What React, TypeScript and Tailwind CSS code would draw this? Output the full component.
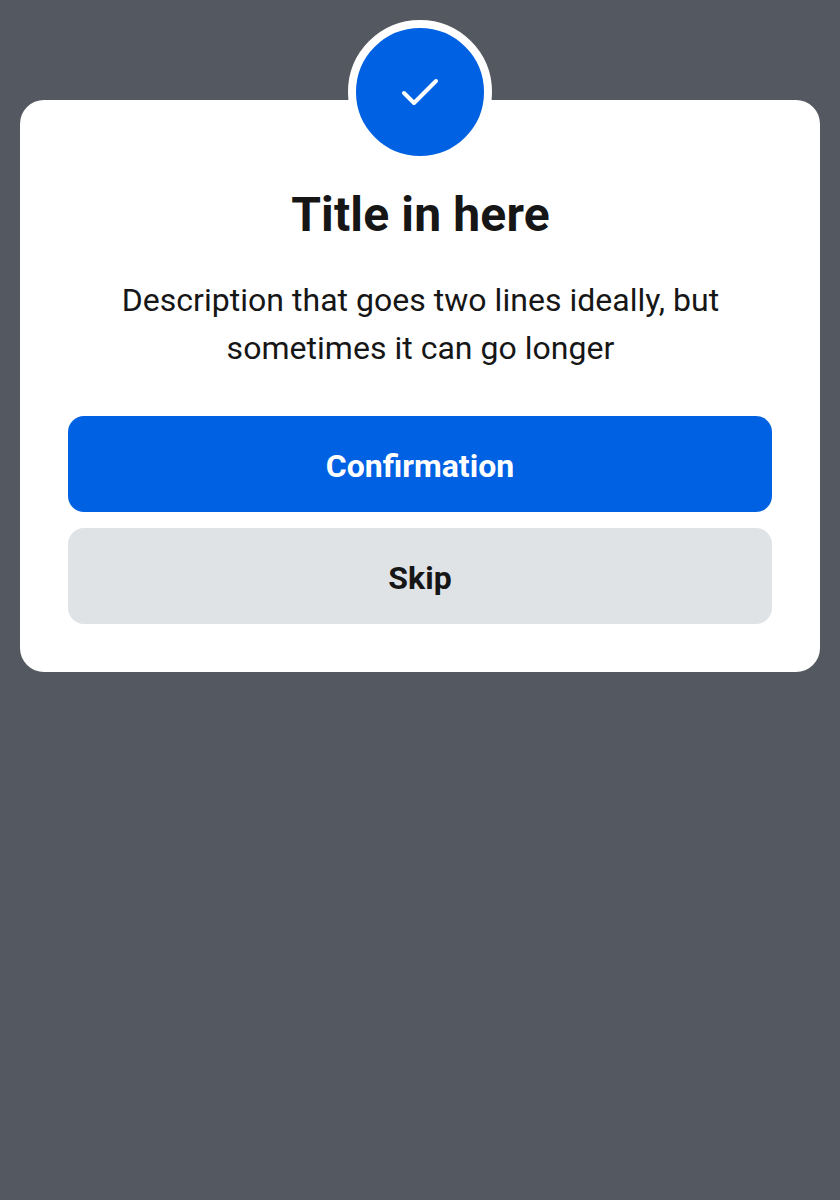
import React from "react";

function CheckIcon() {
  return (
    <svg width="48" height="48" viewBox="0 0 48 48" fill="none" stroke="#ffffff" strokeWidth="4" strokeLinecap="round" strokeLinejoin="round" aria-hidden="true">
      <path d="M8 25L18 35L40 13" />
    </svg>
  );
}

export default function App() {
  return (
    <main className="min-h-[1200px] bg-[#545860] px-5 pt-5 font-['Roboto',sans-serif] text-[#161616]">
      <section className="mt-20 flex h-[572px] flex-col items-center rounded-[24px] bg-white px-12 text-center">
        <div className="-mt-20 flex size-36 shrink-0 items-center justify-center rounded-full border-8 border-white bg-[#0062e3]">
          <CheckIcon />
        </div>
        <h1 className="mt-[21px] pl-px text-[48px] leading-[60px] font-bold tracking-[0.15px]">Title in here</h1>
        <p className="mt-[31px] w-[640px] pl-px text-[32px] leading-[48px] tracking-[0.025px]">
          Description that goes two lines ideally, but sometimes it can go longer
        </p>
        <div className="mt-11 flex w-full flex-col gap-4 text-[32px] leading-[48px] font-bold">
          <button className="h-24 rounded-[16px] bg-[#0062e3] pt-1 text-white">Confirmation</button>
          <button className="h-24 rounded-[16px] bg-[#dfe3e6] pt-1">Skip</button>
        </div>
      </section>
    </main>
  );
}
